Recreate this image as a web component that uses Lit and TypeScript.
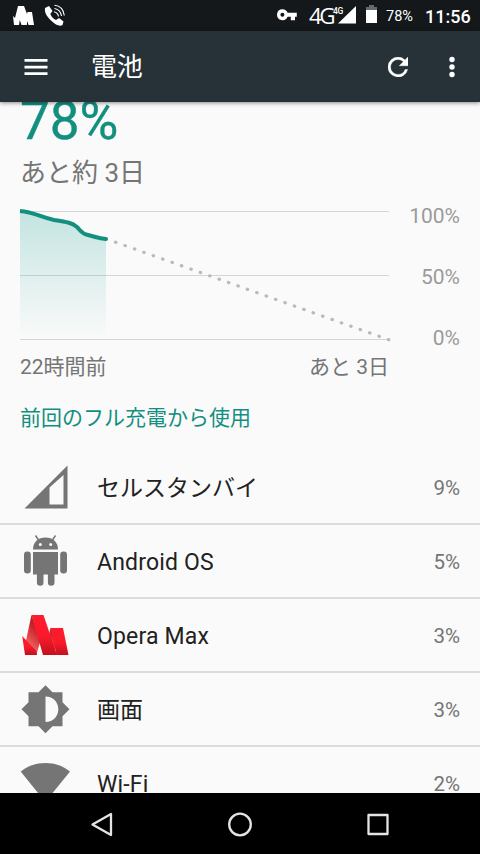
import { LitElement, html, css, svg } from "lit";
import { customElement } from "lit/decorators.js";

const cellIcon = svg`<svg class="icon" viewBox="0 0 50 50">
  <path fill="#757575" fill-rule="evenodd" d="M4.500 46.500L47.500 3.500V46.500ZM29.500 25.500V42.500H43.500V13Z"/></svg>`;

const androidIcon = svg`<svg class="icon" viewBox="0 0 50 50">
  <g fill="#757575">
    <path d="M13 13.500C13 6 18 1.500 25.500 1.500S38 6 38 13.500Z"/>
    <path d="M15.500 -.5L18.500 4M35.500 -.5L32.500 4" stroke="#757575" stroke-width="1.500"/>
    <path d="M13 16H38V38.500H34.500V46.500a3.300 3.300 0 0 1 -6.600 0V38.500H23.500V46.500a3.300 3.300 0 0 1 -6.600 0V38.500H13Z"/>
    <rect x="4" y="15.500" width="6.800" height="22" rx="3.300"/>
    <rect x="40.200" y="15.500" width="6.800" height="22" rx="3.300"/>
  </g>
  <g fill="#fafafa"><circle cx="20.300" cy="8.500" r="1.500"/><circle cx="30.700" cy="8.500" r="1.500"/></g></svg>`;

const operaIcon = svg`<svg class="icon" viewBox="0 0 50 50">
  <defs>
    <linearGradient id="a" x1="0" y1="0" x2="0" y2="1"><stop offset="0" stop-color="#ff1b2d"/><stop offset=".55" stop-color="#f91a2b"/><stop offset="1" stop-color="#c40f1c"/></linearGradient>
    <linearGradient id="b" x1=".7" y1="0" x2=".3" y2="1"><stop offset="0" stop-color="#a00c16"/><stop offset=".4" stop-color="#cf2a30"/><stop offset="1" stop-color="#f87a70"/></linearGradient>
  </defs>
  <path fill="url(#b)" d="M11.500 5L6 30.500L16.500 44L20.500 31Z"/>
  <path fill="url(#b)" d="M30.500 18L28.500 27L34 43L38 26Z"/>
  <path fill="url(#a)" d="M2.200 26L16.500 41L17 45H5Z"/>
  <path fill="url(#a)" d="M11.500 5H23.500L37 45H23Z"/>
  <path fill="url(#a)" d="M30.500 18H43L48.500 45H36.500Z"/></svg>`;

const displayIcon = svg`<svg class="icon" viewBox="0 0 50 50">
  <path fill="#757575" fill-rule="evenodd" d="M42.500 18.200V8.200H32.500L25.500 1.200L18.500 8.200H8.500V18.200L1.500 25.200L8.500 32.200V42.200H18.500L25.500 49.200L32.500 42.200H42.500V32.200L49.500 25.200ZM25.500 38V12.500C33.500 12.500 38.300 18.500 38.300 25.200S33.500 38 25.500 38Z"/></svg>`;

const wifiIcon = svg`<svg class="icon" viewBox="0 0 50 50">
  <path fill="#757575" d="M.700 13.500C7 8.400 16 5 25.500 5S43.500 8.400 50 13.500L25.300 44Z"/></svg>`;

const apps = [
  { name: "セルスタンバイ", share: "9%", icon: cellIcon },
  { name: "Android OS", share: "5%", icon: androidIcon },
  { name: "Opera Max", share: "3%", icon: operaIcon },
  { name: "画面", share: "3%", icon: displayIcon },
  { name: "Wi-Fi", share: "2%", icon: wifiIcon },
];

@customElement("status-bar")
class StatusBar extends LitElement {
  static styles = css`
    :host { display: flex; align-items: center; height: 31px; background: #14181b; color: #fff; flex: none; }
    svg { display: block; flex: none; overflow: visible; }
    .max { margin-left: 13px; }
    .phone { margin-left: 10px; }
    .spacer { flex: 1; }
    .net { font: 400 22.500px/31px "Open Sans", sans-serif; letter-spacing: -2.500px; width: 23px; margin-left: 11px; }
    .small { font: 500 8.500px/10px Roboto, sans-serif; letter-spacing: -.4px; width: 10px; height: 20px; margin-left: 1px; }
    .signal { margin-left: -5px; }
    .battery { margin-left: 10px; }
    .pct { font: 400 14.500px/31px Roboto, sans-serif; width: 27px; margin: 1px 0 0 9px; }
    .clock { font: 500 18px/31px Roboto, sans-serif; width: 45px; margin: 2px 10px 0 12px; }
  `;
  render() {
    return html`
      <svg class="max" width="22" height="31" viewBox="0 0 22 31"><path fill="#fff" d="M0 16L2 18L5 6H11L14 14L14.500 12H19L21 25H15.500L14.300 21L13.800 25H8.500L6.800 20L6 25H1Z"/></svg>
      <svg class="phone" width="20" height="31" viewBox="0 0 20 31">
        <path fill="#fff" d="M0 8L4 6L7.500 11L5.300 14C6.500 17 8.500 19 11 20L14 18L18.500 21.500L17.500 25C15 26.500 11 25.500 6 20.500S-.5 12 0 8Z"/>
        <path fill="none" stroke="#fff" stroke-width="1.100" d="M9 11.700Q13 12.500 13.500 16.500M9.500 8.500Q15.500 9.500 16.500 16M9.500 5.300Q18 6 19.300 15.500"/></svg>
      <div class="spacer"></div>
      <svg width="21" height="31" viewBox="0 0 21 31"><path fill="#fff" fill-rule="evenodd" d="M5.400 9.200A5.500 5.500 0 1 0 10.600 16.800H13.800V20.200H18V16.800H19.800V12.800H10.600A5.500 5.500 0 0 0 5.400 9.200ZM5.400 12.700A2 2 0 1 1 5.400 16.700A2 2 0 1 1 5.400 12.700Z"/></svg>
      <div class="net">4G</div>
      <div class="small">4G</div>
      <svg class="signal" width="18" height="31" viewBox="0 0 18 31"><path fill="#fff" d="M0 23.500L18 6V23.500Z"/></svg>
      <svg class="battery" width="11" height="31" viewBox="0 0 11 31"><path fill="#666a6c" d="M3 5H8V7H11V11H0V7H3Z"/><path fill="#fff" d="M0 10H11V23H0Z"/></svg>
      <div class="pct">78%</div>
      <div class="clock">11:56</div>`;
  }
}

@customElement("tool-bar")
class ToolBar extends LitElement {
  static styles = css`
    :host { display: flex; align-items: center; height: 71px; background: #273238; color: #fff; flex: none;
      box-shadow: 0 1px 4px rgba(0, 0, 0, .45); z-index: 1; }
    svg { display: block; flex: none; }
    .menu { margin-left: 24px; }
    .title { flex: 1; margin: 2px 0 0 43px; font: 400 26px/71px Roboto, "Noto Sans CJK JP", sans-serif; letter-spacing: -.3px; }
    .more { margin: 0 22px 0 38px; }
  `;
  render() {
    return html`
      <svg class="menu" width="24" height="71" viewBox="0 0 24 71"><path fill="#fff" d="M.5 28H23.500V30.700H.5ZM.5 34.700H23.500V37.400H.5ZM.5 41.200H23.500V43.900H.5Z"/></svg>
      <div class="title">電池</div>
      <svg width="20" height="20" viewBox="4 4 16 16"><path fill="#fff" stroke="#fff" stroke-width=".3" d="M17.650 6.350A7.958 7.958 0 0 0 12 4a8 8 0 1 0 7.730 10h-2.080A5.990 5.990 0 0 1 12 18a6 6 0 1 1 0-12c1.660 0 3.140.69 4.220 1.780L13 11h7V4z"/></svg>
      <svg class="more" width="12" height="71" viewBox="0 0 12 71"><g fill="#fff"><circle cx="6" cy="28.500" r="2.700"/><circle cx="6" cy="36" r="2.700"/><circle cx="6" cy="43.500" r="2.700"/></g></svg>`;
  }
}

@customElement("battery-chart")
class BatteryChart extends LitElement {
  static styles = css`
    :host { display: grid; grid-template: 138px 30px / 370px 71px; row-gap: 9px; margin: 0 20px; font: 400 21px/24px Roboto, "Noto Sans CJK JP", sans-serif; color: #757575; }
    .plot { display: block; overflow: visible; }
    .scale { display: flex; flex-direction: column; justify-content: space-between; text-align: right; color: #9a9a9a; height: 146px; margin: -1px 1px 0 0; }
    .range { display: flex; justify-content: space-between; width: 369px; line-height: 30px; }
  `;
  render() {
    return html`
      <svg class="plot" width="370" height="138" viewBox="0 0 370 138">
        <defs><linearGradient id="fill" x1="0" y1="0" x2="0" y2="1"><stop offset="0" stop-color="#009688" stop-opacity=".22"/><stop offset="1" stop-color="#009688" stop-opacity="0"/></linearGradient></defs>
        <path fill="#d4d6d6" d="M0 6H369V7H0ZM0 70H369V71H0ZM0 134H369V135H0Z"/>
        <path fill="url(#fill)" d="M0 6C14 7 20 12 34 15C48 17 52 18 57 22C61 26 62 29 68 30L80 33L86 34V134H0Z"/>
        <path fill="none" stroke="#138f80" stroke-width="4" d="M0 6C14 7 20 12 34 15C48 17 52 18 57 22C61 26 62 29 68 30C75 31.500 78 33.500 86 34"/>
        <circle cx="86" cy="34" r="2" fill="#138f80"/>
        <path stroke="#b4bcbf" stroke-width="3.200" stroke-linecap="round" stroke-dasharray=".5 9.490" d="M95.500 37.200L369.500 135"/>
      </svg>
      <div class="scale"><span>100%</span><span>50%</span><span>0%</span></div>
      <div class="range"><span>22時間前</span><span>あと 3日</span></div>`;
  }
}

@customElement("app-root")
class AppRoot extends LitElement {
  static styles = css`
    :host { display: flex; flex-direction: column; width: 480px; height: 854px; overflow: hidden; background: #fafafa;
      font-family: Roboto, "Noto Sans CJK JP", sans-serif; color: #212121; }
    main { flex: 1; min-height: 0; overflow: hidden; }
    .level { font-size: 53px; line-height: 60px; margin: -11px 0 0 20px; color: #138f80; height: 60px; -webkit-text-stroke: .4px #138f80; }
    .left { font-size: 26px; line-height: 40px; margin: 2px 0 12px 20px; color: #757575; }
    .heading { font-size: 21px; line-height: 30px; margin: 21px 0 0 20px; height: 48px; color: #138f80; }
    .row { display: flex; align-items: center; height: 72px; border-bottom: 2px solid #dcdcdc; }
    .row .icon { width: 50px; height: 50px; margin-left: 20px; flex: none; overflow: visible; }
    .name { flex: 1; margin: 4px 0 0 27px; font-size: 23px; line-height: 40px; }
    .latin { letter-spacing: .17px; }
    .share { margin: 2px 20px 0 0; font-size: 20.500px; line-height: 40px; color: #757575; }
    .nav { flex: none; display: flex; justify-content: center; align-items: center; gap: 102px; height: 61px; background: #000; }
    .nav svg { width: 36px; height: 36px; fill: none; stroke: #e4e4e4; stroke-width: 2.300; stroke-linejoin: round; }
  `;
  render() {
    return html`
      <status-bar></status-bar>
      <tool-bar></tool-bar>
      <main>
        <div class="level">78%</div>
        <div class="left">あと約 3日</div>
        <battery-chart></battery-chart>
        <div class="heading">前回のフル充電から使用</div>
        ${apps.map((a) => html`<div class="row">${a.icon}<div class="name ${/^[A-Z]/.test(a.name) ? "latin" : ""}">${a.name}</div><div class="share">${a.share}</div></div>`)}
      </main>
      <div class="nav">
        <svg viewBox="0 0 36 36"><path d="M8.500 18.500L27 8V29Z"/></svg>
        <svg viewBox="0 0 36 36"><circle cx="18" cy="18.500" r="10.800"/></svg>
        <svg viewBox="0 0 36 36"><rect x="8.500" y="9" width="19" height="19"/></svg>
      </div>`;
  }
}
